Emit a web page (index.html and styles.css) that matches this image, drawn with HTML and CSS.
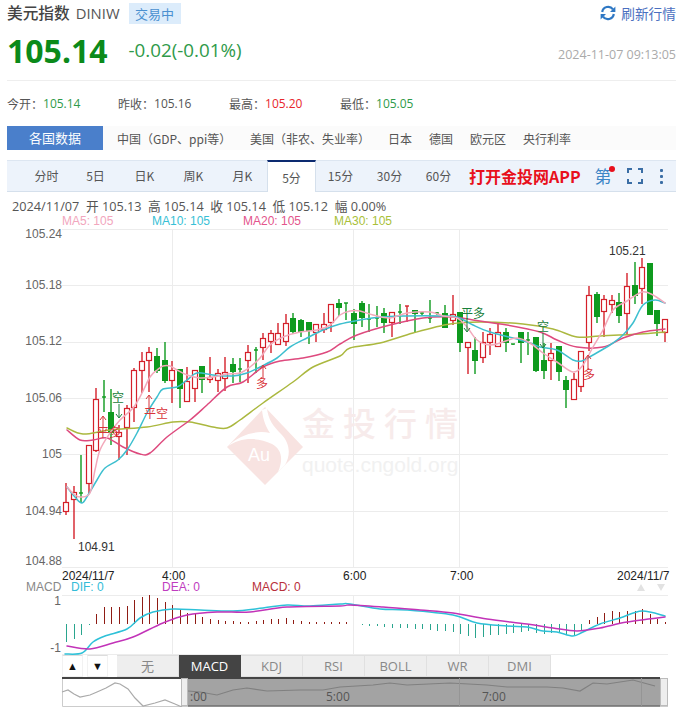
FILE: index.html
```html
<!DOCTYPE html>
<html lang="zh">
<head>
<meta charset="utf-8">
<title>美元指数 DINIW</title>
<link rel="stylesheet" href="styles.css">
</head>
<body>
<main class="page">
  <header class="head">
    <div class="title-row">
      <h1 class="name">美元指数</h1>
      <span class="code">DINIW</span>
      <span class="badge">交易中</span>
      <a class="refresh">
        <svg class="refresh-icon" viewBox="0 0 16 16"><path d="M2.2 7A6 6 0 0 1 13 4.3M13.8 9A6 6 0 0 1 3 11.7"/><polygon class="solid" points="15.4,1.6 15.4,7 10,7"/><polygon class="solid" points="0.6,14.4 0.6,9 6,9"/></svg>
        刷新行情
      </a>
    </div>
    <div class="price-row">
      <strong class="price">105.14</strong>
      <span class="change">-0.02(-0.01%)</span>
      <time class="stamp">2024-11-07 09:13:05</time>
    </div>
  </header>

  <dl class="stats">
    <div class="stat"><dt>今开：</dt><dd class="down">105.14</dd></div>
    <div class="stat"><dt>昨收：</dt><dd>105.16</dd></div>
    <div class="stat"><dt>最高：</dt><dd class="up">105.20</dd></div>
    <div class="stat"><dt>最低：</dt><dd class="down">105.05</dd></div>
  </dl>

  <nav class="countries">
    <span class="countries-head">各国数据</span>
    <a class="c1">中国（GDP、ppi等）</a>
    <a class="c2">美国（非农、失业率）</a>
    <a class="c3">日本</a>
    <a class="c3">德国</a>
    <a class="c3">欧元区</a>
    <a class="c3">央行利率</a>
  </nav>

  <div class="periods">
    <a class="period">分时</a>
    <a class="period">5日</a>
    <a class="period">日K</a>
    <a class="period">周K</a>
    <a class="period">月K</a>
    <a class="period active">5分</a>
    <a class="period">15分</a>
    <a class="period">30分</a>
    <a class="period">60分</a>
    <a class="app">打开金投网APP</a>
    <span class="ce">第<i class="dot"></i></span>
    <svg class="full" viewBox="0 0 16 16"><path d="M1 5V1H5M11 1H15V5M15 11V15H11M5 15H1V11"/></svg>
    <span class="more"><i></i><i></i><i></i></span>
  </div>

  <div class="quote-line">2024/11/07&nbsp; 开 105.13&nbsp; 高 105.14&nbsp; 收 105.14&nbsp; 低 105.12&nbsp; 幅 0.00%</div>
  <div class="ma-line">
    <span class="ma5">MA5: 105</span>
    <span class="ma10">MA10: 105</span>
    <span class="ma20">MA20: 105</span>
    <span class="ma30">MA30: 105</span>
  </div>

  <svg class="chart" viewBox="0 228 679 427" width="679" height="427">
    <g class="grid">
      <path d="M62 229.5H668M62 285.5H668M62 342.5H668M62 398.5H668M62 454.5H668M62 511.5H668M62 567.5H668"/>
      <path d="M172.5 229V567M353.5 229V567M459.5 229V567"/>
      <path d="M62 595.5H668M62 654.5H668M172.5 595V655M353.5 595V655M459.5 595V655"/>
    </g>
    <g class="wm">
      <path class="wm-logo" d="M265 407L303 447L265 485L227 447Z"/>
      <path class="wm-swoosh" d="M227 447C240 437 258 437 272 444C281 449 284 458 278 472L285 465C291 455 290 443 281 434C273 426 268 419 267 408L262 410C263 420 266 427 270 433C257 430 240 434 227 447Z"/>
      <text class="wm-au" x="248" y="461">Au</text>
      <text class="wm-cn" x="302" y="436">金投行情</text>
      <text class="wm-url" x="302" y="472">quote.cngold.org</text>
    </g>
    <g id="candles"></g>
    <g id="lines"></g>
    <g class="marks-g">
      <text x="112" y="402">空</text>
      <path d="M119 404V417M116 414L119 418L122 414"/>
      <text x="461" y="318">平多</text>
      <path d="M467 318V331M464 328L467 332L470 328"/>
      <text x="537" y="331">空</text>
      <path d="M543 333V347M540 344L543 348L546 344"/>
    </g>
    <g class="marks-r">
      <text x="144" y="418">平空</text>
      <path d="M149 408V396M146 399L149 395L152 399"/>
      <text x="97" y="437">平多</text>
      <path d="M103 428V417M100 420L103 416L106 420"/>
      <text x="256" y="388">多</text>
      <path d="M263 378V366M260 369L263 365L266 369"/>
      <text x="583" y="379">多</text>
      <path d="M588 369V356M585 359L588 355L591 359"/>
    </g>
    <g class="axis">
      <text x="62" y="238">105.24</text>
      <text x="62" y="289">105.18</text>
      <text x="62" y="345">105.12</text>
      <text x="62" y="402">105.06</text>
      <text x="62" y="458">105</text>
      <text x="62" y="515">104.94</text>
      <text x="62" y="565">104.88</text>
      <text x="61" y="605">1</text>
      <text x="61" y="652">-1</text>
    </g>
    <g class="peak">
      <text x="609" y="255">105.21</text>
      <text x="78" y="551">104.91</text>
    </g>
    <g class="time">
      <text x="62" y="580">2024/11/7</text>
      <text x="162" y="580">4:00</text>
      <text x="343" y="580">6:00</text>
      <text x="450" y="580">7:00</text>
      <text x="617" y="580">2024/11/7</text>
    </g>
    <g class="macd-labels">
      <text class="ml-name" x="26" y="591">MACD</text>
      <text class="ml-dif" x="71" y="591">DIF: 0</text>
      <text class="ml-dea" x="162" y="591">DEA: 0</text>
      <text class="ml-macd" x="252" y="591">MACD: 0</text>
    </g>
    <path class="shift" d="M641 584L645 591H637ZM657 584H665L661 591Z"/>
  </svg>

  <div class="indicators">
    <div class="arrows">
      <button class="arrow">▲</button>
      <button class="arrow">▼</button>
    </div>
    <a class="ind">无</a>
    <a class="ind on">MACD</a>
    <a class="ind">KDJ</a>
    <a class="ind">RSI</a>
    <a class="ind">BOLL</a>
    <a class="ind">WR</a>
    <a class="ind">DMI</a>
  </div>

  <svg class="navigator" viewBox="0 677 679 30" width="679" height="30">
    <path class="nav-frame" d="M62.5 677V706.5H668"/>
    <rect class="nav-shade" x="188" y="678" width="472" height="28"/>
    <path class="nav-top" d="M62 678H660"/>
    <path class="nav-bottom" d="M188 706H660"/>
    <path class="nav-line-a" d="M62 692L68 690L74 694L80 697L90 695L97 692L106 688L115 683L120 684L128 689L135 698L143 706L155 703L165 700L175 704L182 707"/>
    <path class="nav-line-b" d="M188 691L200 692L217 695L233 690L247 688L267 691L300 690L323 690L340 687L373 685L390 683L407 685L450 683L487 685L507 687L547 687L563 688L580 691L593 683L607 684L633 680L655 686"/>
    <path class="nav-grid" d="M459.5 678V706M641.5 678V706"/>
    <rect class="nav-handle" x="181.5" y="678.5" width="6" height="27"/>
    <rect class="nav-handle" x="660.5" y="678.5" width="7" height="27"/>
    <g class="nav-text">
      <text x="190" y="701">:00</text>
      <text x="326" y="701">5:00</text>
      <text x="482" y="701">7:00</text>
    </g>
  </svg>
</main>
<script src="chart.js"></script>
</body>
</html>
```

FILE: styles.css
```css
* { box-sizing: border-box; }
html, body { margin: 0; padding: 0; background: #fff; }
body { font-family: "Noto Sans CJK SC", "Noto Sans", sans-serif; color: #555; overflow: hidden; }
a { color: inherit; text-decoration: none; }
.page { width: 679px; height: 707px; overflow: hidden; }

.head { margin: 0 3px 0 7px; border-bottom: 1px solid #eee; height: 81px; }
.title-row { display: flex; align-items: center; height: 26px; }
.name { margin: 0; font-size: 15.7px; font-weight: 500; color: #444; line-height: 26px; }
.code { margin-left: 6px; font: 14.8px "Open Sans", sans-serif; color: #555; }
.badge { margin-left: 9px; width: 52px; height: 21px; line-height: 21px; text-align: center; font-size: 13px; color: #4a90d0; background: #dcecfb; }
.refresh { margin-left: auto; display: flex; align-items: center; font-size: 13.7px; color: #4a6fc0; line-height: 26px; }
.refresh-icon { width: 16px; height: 16px; margin-right: 5px; fill: none; stroke: #2f78c4; stroke-width: 2.2; }
.refresh-icon .solid { fill: #2f78c4; stroke: none; }

.price-row { display: flex; align-items: center; height: 50px; }
.price { font: 700 32px "Noto Sans", sans-serif; color: #0b8a1a; line-height: 50px; }
.change { margin-left: 21px; font: 18.8px "Open Sans", sans-serif; color: #2f9a4a; position: relative; top: -1px; }
.stamp { margin-left: auto; font: 12.5px "Open Sans", sans-serif; color: #aaa; position: relative; top: 3px; }

.stats { display: flex; margin: 0 0 0 7px; height: 45px; align-items: center; font-size: 12px; }
.stat { display: flex; width: 111px; }
.stat dt { color: #555; }
.stat dd { margin: 0; font-family: "Open Sans", sans-serif; color: #555; }
.stat dd.down { color: #2f9a4a; }
.stat dd.up { color: #e8262c; }

.countries { display: flex; align-items: center; margin: 0 3px 10px 7px; height: 24px; background: #fbfbfb; font-size: 12px; color: #555; }
.countries-head { width: 96px; height: 24px; line-height: 24px; text-align: center; background: #4a7fcb; color: #fff; font-size: 13px; }
.c1 { margin-left: 14px; width: 133px; }
.c2 { width: 138px; }
.c3 { margin-right: 17px; }

.periods { display: flex; align-items: center; margin: 0 3px 0 7px; padding-left: 15px; height: 32px; background: #edf3fb; border-top: 1px solid #dde6f1; border-bottom: 1px solid #d5e0ec; font-size: 12px; color: #555; }
.period { width: 49px; text-align: center; line-height: 30px; }
.period.active { height: 32px; margin-top: -1px; margin-bottom: -1px; line-height: 32px; background: #fff; border-top: 2px solid #0c2a70; border-left: 1px solid #d5e0ec; border-right: 1px solid #d5e0ec; }
.app { margin-left: 6px; font-size: 16px; font-weight: 700; color: #e8101c; white-space: nowrap; }
.ce { position: relative; margin-left: 14px; font-size: 17px; color: #3d86c6; line-height: 30px; }
.dot { position: absolute; top: 5px; right: -3px; width: 6px; height: 6px; border-radius: 50%; background: #e8101c; }
.full { width: 16px; height: 16px; margin-left: 15px; fill: none; stroke: #3b6ea5; stroke-width: 2; }
.more { display: flex; flex-direction: column; gap: 3px; margin-left: 17px; }
.more i { width: 3px; height: 3px; background: #3b6ea5; border-radius: 1px; }

.quote-line { margin-top: 7px; padding-left: 12px; height: 15px; font: 12.7px/15px "Open Sans", "Noto Sans CJK SC", sans-serif; color: #555; white-space: nowrap; }
.ma-line { position: relative; height: 14px; font: 12px/14px "Liberation Sans", sans-serif; display: flex; padding-left: 62px; }
.ma5 { width: 90px; color: #f2a6bd; }
.ma10 { width: 91px; color: #38bfd6; }
.ma20 { width: 91px; color: #e4558c; }
.ma30 { color: #a9bf38; }

.chart { display: block; }
.chart text { font-family: "Liberation Sans", sans-serif; font-size: 12px; }
.grid path { fill: none; stroke: #ececec; stroke-width: 1; }
.wm-logo { fill: #f8e3e1; }
.wm-swoosh { fill: #fff; }
.chart .wm-au { fill: #fff; font-size: 18px; }
.chart .wm-cn { fill: #f7ebeb; font-family: "Noto Sans CJK SC", sans-serif; font-size: 33px; font-weight: 500; letter-spacing: 8px; }
.chart .wm-url { fill: #f1f1f1; font-size: 21px; }
.axis text { fill: #666; text-anchor: end; }
.peak text { fill: #333; }
.time text { fill: #222; }
.chart .marks-g text, .chart .marks-r text { font-family: "Noto Sans CJK SC", sans-serif; font-size: 12px; }
.marks-g text { fill: #18803a; }
.marks-g path { fill: none; stroke: #18803a; }
.marks-r text { fill: #d8343a; }
.marks-r path { fill: none; stroke: #d8343a; }
.ml-name { fill: #888; }
.ml-dif { fill: #33bcd8; }
.ml-dea { fill: #c03cc0; }
.ml-macd { fill: #b8303a; }
.shift { fill: #e2e2e2; }

.wick-r { stroke: #d4202a; stroke-width: 1.4; }
.wick-g { stroke: #0e9a1e; stroke-width: 1.4; }
.body-r { fill: #fff; stroke: #d4202a; stroke-width: 1.2; }
.body-g { fill: #0e9a1e; stroke: #0e9a1e; stroke-width: 1; }
.line { fill: none; stroke-width: 1.5; stroke-linecap: round; }
.l-ma5 { stroke: #f3a9bb; }
.l-ma10 { stroke: #3dbfcf; }
.l-ma20 { stroke: #de4a7e; }
.l-ma30 { stroke: #abb83f; }
.l-dif { stroke: #2ec1d8; }
.l-dea { stroke: #c233b8; }
.hist-r { stroke: #8f1c14; stroke-width: 1; }
.hist-g { stroke: #2aa58e; stroke-width: 1; }

.indicators { display: flex; height: 22px; margin-left: 62px; }
.arrows { display: flex; width: 55px; gap: 4px; }
.arrow { width: 21px; height: 22px; padding: 0; border: 1px solid #f2f2f2; border-top: 1px solid #ddd; background: #fff; color: #111; font-size: 11px; line-height: 20px; }
.ind { width: 62px; height: 22px; text-align: center; background: #eee; border: 1px solid #e0e0e0; border-left: 0; font: 13px/21px "Open Sans", "Noto Sans CJK SC", sans-serif; color: #888; }
.ind.on { background: #444; color: #fff; border-color: #444; }

.navigator { display: block; }
.nav-frame { fill: none; stroke: #ccc; }
.nav-shade { fill: #a3a3a3; }
.nav-top { fill: none; stroke: #444; stroke-width: 2; }
.nav-bottom { fill: none; stroke: #555; stroke-width: 1; }
.nav-line-a { fill: none; stroke: #aaa; stroke-width: 1.2; }
.nav-line-b { fill: none; stroke: #808080; stroke-width: 1.2; }
.nav-grid { fill: none; stroke: #959595; }
.nav-handle { fill: #eee; stroke: #bbb; }
.nav-text text { font-family: "Open Sans", sans-serif; font-size: 12px; fill: #555; }
```

FILE: chart.js
```js
var NS = "http://www.w3.org/2000/svg";
function el(parent, tag, cls, attrs) {
  var n = document.createElementNS(NS, tag);
  n.setAttribute("class", cls);
  for (var k in attrs) n.setAttribute(k, attrs[k]);
  parent.appendChild(n);
  return n;
}
function xAt(i) { return Math.round(66 + i * 7.58); }

// kind, body top, body bottom, wick high, wick low
var candles = [
["r",502,511,483,515],["r",492,499,486,539],["g",493,494,455,503],["r",445,483,445,493],
["r",399,450,388,452],["g",397,398,380,412],["g",412,432,389,445],["r",432,436,425,460],
["r",408,427,405,455],["r",370,407,368,422],["r",361,370,352,393],["r",352,360,347,392],
["g",356,370,348,373],["g",360,380,342,383],["r",370,380,361,403],["g",369,388,369,408],
["r",381,401,367,401],["r",370,388,370,402],["g",366,379,366,393],["r",377,379,357,383],
["r",373,380,369,392],["r",372,378,357,391],["g",364,371,358,383],["g",369,370,358,382],
["r",352,360,345,383],["g",350,351,347,373],["r",338,347,333,360],["r",333,341,330,353],
["r",333,344,323,345],["r",323,341,314,346],["g",318,331,313,334],["g",320,331,319,337],
["g",322,330,322,344],["r",324,332,324,342],["r",324,329,313,333],["r",304,322,304,332],
["g",303,307,299,316],["g",303,304,303,320],["g",313,323,309,340],["g",303,317,301,327],
["g",319,320,304,332],["g",318,319,306,327],["g",313,322,308,333],["r",312,322,312,337],
["g",312,313,304,324],["r",306,307,306,322],["g",310,313,310,332],["g",313,314,312,315],
["g",318,319,300,323],["g",313,314,312,315],["g",313,327,305,327],["r",314,320,295,325],
["g",312,342,312,352],["r",342,347,342,374],["g",350,360,337,374],["r",342,357,332,363],
["r",334,342,328,355],["r",332,346,324,346],["g",332,342,328,352],["g",344,345,344,345],
["g",332,342,332,363],["g",340,341,332,355],["g",337,370,337,372],["g",360,370,343,379],
["r",353,360,343,380],["g",346,371,346,381],["g",380,389,376,408],["r",379,399,373,399],
["r",351,386,351,392],["r",295,342,286,351],["g",294,316,292,323],["r",299,311,295,337],
["r",300,304,295,313],["g",302,315,293,323],["r",286,313,273,335],["g",285,295,262,304],
["r",267,288,258,304],["g",263,314,263,314],["g",310,323,310,336],["r",319,332,319,342]
];

var hist = [-18,-15,-11,-1,10,17,17,17,18,24,27,29,26,22,19,14,11,10,7,5,4,3,3,2,2,3,4,5,5,6,4,3,2,2,2,2,2,2,0,
-1,-2,-2,-3,-4,-4,-4,-5,-5,-6,-7,-7,-8,-10,-12,-14,-13,-11,-11,-10,-9,-8,-7,-9,-10,-9,-9,-11,-11,-7,
4,7,11,13,12,13,13,15,10,5,2];

var series = {
  "l-ma30": [67,428,83,434,110,430,147,427,173,422,190,422,213,427,227,428,240,420,263,403,293,382,313,367,340,356,350,348,380,343,413,333,450,324,480,322,523,324,553,329,577,337,600,336,640,334,665,332],
  "l-ma20": [67,430,80,440,93,440,107,438,123,447,140,454,150,453,167,437,190,420,207,405,227,387,243,382,263,367,280,361,303,358,327,352,340,344,357,335,390,325,423,318,453,317,473,320,507,325,540,332,557,340,577,347,603,347,623,338,643,332,665,329],
  "l-ma10": [67,487,75,497,82,503,88,495,97,480,105,468,118,460,127,450,137,433,147,413,157,397,163,389,177,387,187,380,197,373,213,375,233,376,247,373,260,367,277,358,290,347,307,338,323,330,340,324,360,320,380,317,407,316,440,316,457,317,473,325,490,332,513,338,530,343,540,347,557,350,573,360,582,361,593,355,610,345,623,335,633,323,643,305,655,300,665,303],
  "l-ma5": [67,487,75,495,81,497,90,493,95,470,100,450,110,433,120,420,133,408,142,393,150,377,157,370,163,366,170,366,177,370,187,375,200,378,213,377,227,374,240,373,250,367,260,358,270,345,283,337,300,332,317,330,330,325,340,315,350,311,360,311,373,315,390,318,407,313,430,312,443,316,457,318,467,327,477,340,490,345,503,342,517,338,530,343,543,353,557,362,573,372,583,365,593,347,603,330,613,310,627,301,642,292,653,295,665,303],
  "l-dif": [65,654,82,653,93,642,105,636,127,629,140,618,153,612,173,609,200,610,233,611,263,608,287,605,310,606,340,604,350,604,380,609,407,610,453,615,477,623,507,626,527,627,543,631,557,632,573,636,583,632,600,624,620,618,642,611,665,616],
  "l-dea": [67,646,90,649,113,643,133,637,163,623,187,615,217,612,250,612,287,607,340,606,350,605,383,607,420,610,453,613,487,619,527,624,553,628,577,631,600,628,627,622,665,617]
};

function smooth(p) {
  var d = "M" + p[0] + " " + p[1];
  for (var i = 0; i < p.length - 2; i += 2) {
    var x0 = p[Math.max(i - 2, 0)], y0 = p[Math.max(i - 1, 1)];
    var x1 = p[i], y1 = p[i + 1], x2 = p[i + 2], y2 = p[i + 3];
    var x3 = p[Math.min(i + 4, p.length - 2)], y3 = p[Math.min(i + 5, p.length - 1)];
    d += "C" + (x1 + (x2 - x0) / 6).toFixed(1) + " " + (y1 + (y2 - y0) / 6).toFixed(1) + " " +
         (x2 - (x3 - x1) / 6).toFixed(1) + " " + (y2 - (y3 - y1) / 6).toFixed(1) + " " + x2 + " " + y2;
  }
  return d;
}

var cg = document.getElementById("candles");
var lg = document.getElementById("lines");

hist.forEach(function (v, i) {
  if (!v) return;
  var x = xAt(i) + 0.5;
  el(cg, "line", v > 0 ? "hist-r" : "hist-g", { x1: x, x2: x, y1: 624, y2: 624 - v });
});

candles.forEach(function (c, i) {
  var x = xAt(i), k = c[0];
  el(cg, "line", "wick-" + k, { x1: x, x2: x, y1: c[3], y2: c[4] });
  if (c[2] - c[1] <= 1) {
    el(cg, "line", "wick-" + k, { x1: x - 2, x2: x + 2, y1: c[1], y2: c[1] });
  } else {
    el(cg, "rect", "body-" + k, { x: x - 2.5, y: c[1] + 0.5, width: 5, height: c[2] - c[1] });
  }
});

Object.keys(series).forEach(function (name) {
  el(lg, "path", "line " + name, { d: smooth(series[name]) });
});
```
